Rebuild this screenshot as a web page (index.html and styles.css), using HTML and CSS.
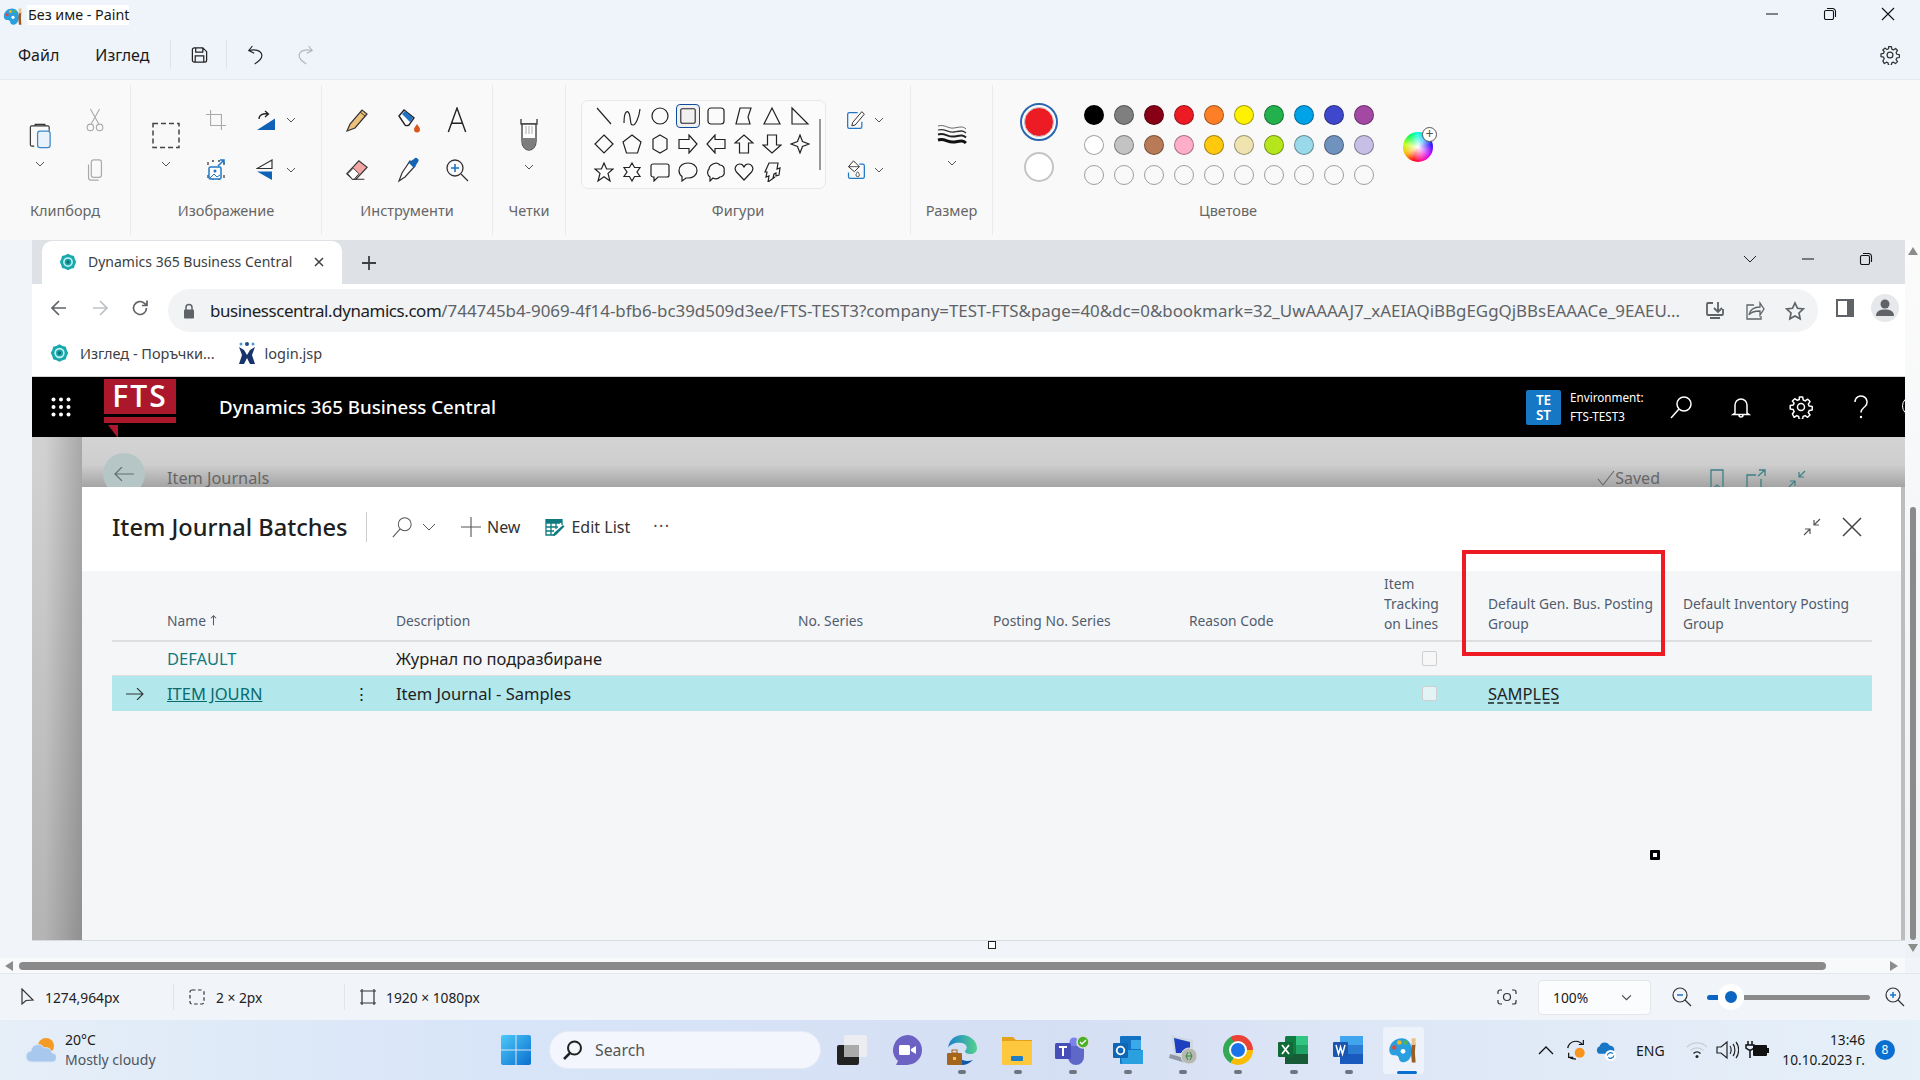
FILE: index.html
```html
<!DOCTYPE html>
<html lang="bg">
<head>
<meta charset="utf-8">
<title>Без име - Paint</title>
<link rel="stylesheet" href="styles.css">
</head>
<body>
<svg class="defs" aria-hidden="true">
  <symbol id="paint" viewBox="0 0 24 24">
    <path d="M11 2.500C5.500 2.500 1 6.600 1 12c0 3 2 4.500 4 4.200 2-.3 3.500.6 3.700 2.400.2 2.200 1.800 3.400 4 3.200 4-.5 6.300-4 6.300-9.800 0-5.700-3.500-9.500-8-9.500z" fill="#2a9fe0"/>
    <circle cx="5" cy="10" r="1.800" fill="#e2483d"/><circle cx="9" cy="6" r="1.800" fill="#f4b71d"/><circle cx="14" cy="6" r="1.800" fill="#4fb455"/><circle cx="12" cy="13" r="1.900" fill="#fff"/>
    <path d="M19 7h3l-.5 7 .6 8h-3l-.7-8z" fill="#9a5b24"/><path d="M18.800 2.500h3.400L22 8h-3z" fill="#e9c38b"/>
  </symbol>
  <symbol id="bc" viewBox="0 0 24 24">
    <path d="M12 1l4 2 4 1 1 4 2 4-2 4-1 4-4 1-4 2-4-2-4-1-1-4-2-4 2-4 1-4 4-1z" fill="#19a9ad"/>
    <circle cx="12" cy="12" r="5.500" fill="none" stroke="#c8f3f4" stroke-width="2"/><circle cx="12" cy="12" r="2.200" fill="#0b6f78"/>
  </symbol>
  <symbol id="chev" viewBox="0 0 10 6"><path d="M1 1l4 4 4-4" fill="none" stroke="currentColor" stroke-width="1"/></symbol>
  <symbol id="gear" viewBox="0 0 24 24">
    <path d="M10.300 2h3.400l.5 3 2 .9 2.500-1.700 2.300 2.400-1.700 2.500.9 2 3 .5v3.400l-3 .5-.9 2 1.700 2.500-2.400 2.300-2.500-1.700-2 .9-.5 3h-3.400l-.5-3-2-.9-2.500 1.700L3.400 19l1.700-2.500-.9-2-3-.5v-3.400l3-.5.9-2L3.400 6l2.400-2.300 2.500 1.700 2-.9z" fill="none" stroke="currentColor" stroke-width="1.500" stroke-linejoin="round"/>
    <circle cx="12" cy="12" r="3.500" fill="none" stroke="currentColor" stroke-width="1.500"/>
  </symbol>
  <symbol id="collapse" viewBox="0 0 20 20"><path d="M2 18l6-6M8 17v-5H3M18 2l-6 6M12 3v5h5" fill="none" stroke="currentColor" stroke-width="1.200"/></symbol>
</svg>

<header class="titlebar">
  <svg class="app-icon"><use href="#paint"/></svg>
  <span class="doc-title">Без име - Paint</span>
  <div class="win-controls">
    <svg class="wc wc-min" viewBox="0 0 14 14"><path d="M1 7h12" stroke="#111" fill="none"/></svg>
    <svg class="wc" viewBox="0 0 14 14"><path d="M4 1.500h5.500a3 3 0 0 1 3 3V10M1.500 5a1.500 1.500 0 0 1 1.500-1.500h6A1.500 1.500 0 0 1 10.500 5v6A1.500 1.500 0 0 1 9 12.500H3A1.500 1.500 0 0 1 1.500 11z" stroke="#111" fill="none" stroke-width="1.100"/></svg>
    <svg class="wc" viewBox="0 0 14 14"><path d="M1 1l12 12M13 1L1 13" stroke="#111" fill="none" stroke-width="1.100"/></svg>
  </div>
</header>

<nav class="menubar">
  <span class="menu-item m-file">Файл</span>
  <span class="menu-item m-view">Изглед</span>
  <i class="menu-sep sep-a"></i>
  <svg class="menu-ico" viewBox="0 0 20 20"><path d="M2.500 4.500a2 2 0 0 1 2-2h9l4 4v9a2 2 0 0 1-2 2h-11a2 2 0 0 1-2-2zM6 2.500v4.500h7.500V2.500M5.500 17.500V11h9v6.500" fill="none" stroke="#222" stroke-width="1.300"/></svg>
  <i class="menu-sep sep-b"></i>
  <svg class="menu-ico undo" viewBox="0 0 20 24"><path d="M6 2L2 7l6 3M2.500 7c6-1.500 13-.5 14 5 .5 4-3 7-8 10" fill="none" stroke="#222" stroke-width="1.300"/></svg>
  <svg class="menu-ico redo" viewBox="0 0 20 24"><path d="M14 2l4 5-6 3M17.500 7c-6-1.500-13-.5-14 5-.5 4 3 7 8 10" fill="none" stroke="#b5b5b5" stroke-width="1.300"/></svg>
  <svg class="menu-gear"><use href="#gear"/></svg>
</nav>

<section class="ribbon">
  <div class="group g-clip">
    <div class="tools grid-clip">
      <div class="big">
        <svg class="big-ico" viewBox="0 0 24 28"><path d="M6 25H3.500A1.500 1.500 0 0 1 2 23.500V5.500A1.500 1.500 0 0 1 3.500 4H20a1.500 1.500 0 0 1 1.500 1.500V9M7 4V2.500h10V4" fill="none" stroke="#333" stroke-width="1.200"/><rect x="9.500" y="9.500" width="13" height="17" rx="2.500" fill="#e9f2fb" stroke="#3c86c8" stroke-width="1.300"/></svg>
        <svg class="chev-ico"><use href="#chev"/></svg>
      </div>
      <svg class="mid-ico" viewBox="0 0 20 26"><path d="M5 1l9 16M15 1L6 17" stroke="#aaa" fill="none" stroke-width="1.200"/><circle cx="5" cy="21" r="3.500" fill="none" stroke="#aaa" stroke-width="1.200"/><circle cx="15" cy="21" r="3.500" fill="none" stroke="#aaa" stroke-width="1.200"/></svg>
      <svg class="mid-ico" viewBox="0 0 20 26"><rect x="6" y="2" width="11" height="19" rx="2.500" fill="none" stroke="#aaa" stroke-width="1.300"/><path d="M3 7v14a3 3 0 0 0 3 3h8" fill="none" stroke="#aaa" stroke-width="1.300"/></svg>
    </div>
    <div class="label">Клипборд</div>
  </div>

  <div class="group g-image">
    <div class="tools grid-image">
      <div class="big">
        <svg class="big-ico wide" viewBox="0 0 28 26"><rect x="1" y="1" width="26" height="24" fill="none" stroke="#444" stroke-width="1.500" stroke-dasharray="5 3"/></svg>
        <svg class="chev-ico"><use href="#chev"/></svg>
      </div>
      <svg class="mid-ico" viewBox="0 0 22 22"><path d="M5 0v17h17M0 5h17v17" fill="none" stroke="#aaa" stroke-width="1.200"/></svg>
      <svg class="mid-ico" viewBox="0 0 20 20"><path d="M1 20L19 8.500V20z" fill="#0f62b5"/><path d="M3 9c0-4 4-6 9-5M9 1l3.500 3L9 7" fill="none" stroke="#222" stroke-width="1.300"/></svg>
      <svg class="chev-ico small"><use href="#chev"/></svg>
      <svg class="mid-ico" viewBox="0 0 20 22"><path d="M2 3v3M2 16v3M18 3v3M18 16v3M6 2h2M12 2h2M6 20h2M12 20h2" stroke="#444" fill="none" stroke-width="1.300"/><rect x="3" y="8" width="12" height="12" rx="1.500" fill="#fff" stroke="#2178c4" stroke-width="1.500"/><circle cx="9" cy="12" r="1.500" fill="#2178c4"/><path d="M4 19l4-4 3 3 3-2" stroke="#2178c4" fill="none"/><path d="M12 7l6-6M14 1h4v4" stroke="#2178c4" fill="none" stroke-width="1.500"/></svg>
      <svg class="mid-ico" viewBox="0 0 20 22"><path d="M16 1L1 9.500h15z" fill="none" stroke="#333" stroke-width="1.200"/><path d="M16 21L1 12.500h15z" fill="#0f62b5"/></svg>
      <svg class="chev-ico small"><use href="#chev"/></svg>
    </div>
    <div class="label">Изображение</div>
  </div>

  <div class="group g-tools">
    <div class="tools grid-tools">
      <svg class="tool-ico" viewBox="0 0 24 26"><path d="M2 24l3-7L17 3l5 4-12 14z" fill="#eec27d" stroke="#333" stroke-width="1.200"/><path d="M15 5l5 4" stroke="#333" fill="none"/></svg>
      <svg class="tool-ico" viewBox="0 0 24 26"><path d="M3 9l5-6 10 8-5 7c-2 1-3 1-4 0z" fill="#fff" stroke="#222" stroke-width="1.400"/><path d="M6 7l3-3 8 7-3 4z" fill="#1d72c4"/><path d="M21 17c2 3 3 4 3 5.500a3 3 0 0 1-6 0c0-1.500 1-2.500 3-5.500z" fill="#d9581f"/></svg>
      <svg class="tool-ico" viewBox="0 0 20 24"><path d="M2 23L10 1l8 22M5 15h10" fill="none" stroke="#222" stroke-width="1.300"/></svg>
      <svg class="tool-ico" viewBox="0 0 26 26"><path d="M2 17L15 3l9 7-12 13H8z" fill="#f3a6a6" stroke="#333" stroke-width="1.200"/><path d="M2 17l7 6h12" fill="none" stroke="#333" stroke-width="1.200"/><path d="M3 17l6-6 6 6-5 6H8z" fill="#fff" stroke="#333"/></svg>
      <svg class="tool-ico" viewBox="0 0 22 26"><path d="M13 4l5 5-10 11-6 4 3-8z" fill="#fff" stroke="#333" stroke-width="1.200"/><path d="M11 5l6 6 2-3 2-3a2.500 2.500 0 0 0-4-3l-3 2z" fill="#1565b5"/></svg>
      <svg class="tool-ico" viewBox="0 0 24 24"><circle cx="10" cy="10" r="8" fill="none" stroke="#333" stroke-width="1.300"/><path d="M16 16l7 7" stroke="#333" stroke-width="1.300"/><path d="M10 6v8M6 10h8" stroke="#1d72c4" stroke-width="1.600"/></svg>
    </div>
    <div class="label">Инструменти</div>
  </div>

  <div class="group g-brush">
    <div class="tools centered">
      <div class="big">
        <svg class="big-ico brush" viewBox="0 0 18 34"><path d="M1 1v5h16V1" fill="none" stroke="#444" stroke-width="1.400"/><path d="M2 6h14v17c0 5-3 9-7 9s-7-4-7-9z" fill="#fff" stroke="#444" stroke-width="1.400"/><path d="M2 20h14v3c0 5-3 9-7 9s-7-4-7-9z" fill="#7d7d7d"/><path d="M6 8v8M9 8v8M12 8v8" stroke="#aaa"/></svg>
        <svg class="chev-ico"><use href="#chev"/></svg>
      </div>
    </div>
    <div class="label">Четки</div>
  </div>

  <div class="group g-shapes">
    <div class="tools shapes-row">
      <div class="shape-panel">
        <svg class="shape" viewBox="0 0 20 20"><path d="M3 2l14 16" /></svg>
        <svg class="shape" viewBox="0 0 20 20"><path d="M2 17c0-14 5-14 6-6s1 8 3 8 6-6 7-16"/></svg>
        <svg class="shape" viewBox="0 0 20 20"><circle cx="10" cy="10" r="8"/></svg>
        <svg class="shape sel" viewBox="0 0 20 20"><rect x="2" y="2" width="16" height="16" rx="1.500"/></svg>
        <svg class="shape" viewBox="0 0 20 20"><rect x="2" y="2" width="16" height="16" rx="3"/></svg>
        <svg class="shape" viewBox="0 0 20 20"><path d="M6 2h11l-3 9 2 7H2z"/></svg>
        <svg class="shape" viewBox="0 0 20 20"><path d="M10 2l8 16H2z"/></svg>
        <svg class="shape" viewBox="0 0 20 20"><path d="M2 2l16 16H2z"/></svg>
        <svg class="shape" viewBox="0 0 20 20"><path d="M10 1l9 9-9 9-9-9z"/></svg>
        <svg class="shape" viewBox="0 0 20 20"><path d="M10 1l9 7-3.500 11h-11L1 8z"/></svg>
        <svg class="shape" viewBox="0 0 20 20"><path d="M10 1l7 4v10l-7 4-7-4V5z"/></svg>
        <svg class="shape" viewBox="0 0 20 20"><path d="M1 5.500h10V1l8 9-8 9v-4.500H1z"/></svg>
        <svg class="shape" viewBox="0 0 20 20"><path d="M19 5.500H9V1l-8 9 8 9v-4.500h10z"/></svg>
        <svg class="shape" viewBox="0 0 20 20"><path d="M5.500 19V9H1l9-8 9 8h-4.500v10z"/></svg>
        <svg class="shape" viewBox="0 0 20 20"><path d="M5.500 1v10H1l9 8 9-8h-4.500V1z"/></svg>
        <svg class="shape" viewBox="0 0 20 20"><path d="M10 1l2.500 6.500L19 10l-6.500 2.500L10 19l-2.500-6.500L1 10l6.500-2.500z"/></svg>
        <svg class="shape" viewBox="0 0 20 20"><path d="M10 1l2.600 6H19l-5 4.400L16 19l-6-4.200L4 19l2-7.600L1 7h6.400z"/></svg>
        <svg class="shape" viewBox="0 0 20 20"><path d="M10 1l2.600 4.500H18L15 10l3 4.500h-5.400L10 19l-2.600-4.500H2L5 10 2 5.500h5.400z"/></svg>
        <svg class="shape" viewBox="0 0 20 20"><path d="M3 2h14a2 2 0 0 1 2 2v9a2 2 0 0 1-2 2H8l-4 4v-4H3a2 2 0 0 1-2-2V4a2 2 0 0 1 2-2z"/></svg>
        <svg class="shape" viewBox="0 0 20 20"><path d="M10 1c5 0 9 3 9 7.500S15 16 10 16H8l-4 3v-4.500C2 13 1 11 1 8.500 1 4 5 1 10 1z"/></svg>
        <svg class="shape" viewBox="0 0 20 20"><path d="M10 1c2 0 3 1 4 2 3 0 5 3 4 6 1 3-1 6-4 6-2 2-5 2-7 1l-3 3v-4c-3-2-3-6-1-8 0-3 3-5 7-6z"/></svg>
        <svg class="shape" viewBox="0 0 20 20"><path d="M10 18L2.500 10C-.5 6.500 2 2 6 2c2 0 3 1 4 3 1-2 2-3 4-3 4 0 6.500 4.500 3.500 8z"/></svg>
        <svg class="shape" viewBox="0 0 20 20"><path d="M7 1h9l-1 6 3-1-1 7-3 1v-3l-2 1-1 4 2-1-7 5 1-6-3 1 1-5H3z"/></svg>
        <i class="shape-thumb"></i>
      </div>
      <div class="shape-opts">
        <svg class="opt-ico" viewBox="0 0 24 24"><path d="M14 3H4a2 2 0 0 0-2 2v15a2 2 0 0 0 2 2h13a2 2 0 0 0 2-2v-6" fill="none" stroke="#2178c4" stroke-width="1.500"/><path d="M19 2l3 3L11 18l-4 1 1-4z" fill="#fff" stroke="#333" stroke-width="1.200"/></svg>
        <svg class="chev-ico small"><use href="#chev"/></svg>
        <svg class="opt-ico" viewBox="0 0 24 24"><path d="M16 5h4a2 2 0 0 1 2 2v13a2 2 0 0 1-2 2H5a2 2 0 0 1-2-2v-5" fill="none" stroke="#2178c4" stroke-width="1.500"/><path d="M9 1l7 7-6 6-7-6z" fill="#fff" stroke="#333" stroke-width="1.200"/><path d="M3 8h13" stroke="#333"/><path d="M14 14c1.500 2 2 3 2 4a2 2 0 0 1-4 0c0-1 .5-2 2-4z" fill="#fff" stroke="#333"/></svg>
        <svg class="chev-ico small"><use href="#chev"/></svg>
      </div>
    </div>
    <div class="label">Фигури</div>
  </div>

  <div class="group g-size">
    <div class="tools centered">
      <div class="big">
        <svg class="big-ico sizes" viewBox="0 0 30 26"><path d="M1 4c7-2 10 3 16 2s9-2 12 1" fill="none" stroke="#444" stroke-width=".8"/><path d="M1 8c7-2 10 3 16 2s9-2 12 1" fill="none" stroke="#333" stroke-width="1.300"/><path d="M1 12.500c7-2 10 3 16 2s9-2 12 1" fill="none" stroke="#222" stroke-width="2"/><path d="M1 18c7-2 10 3 16 2s9-2 12 1" fill="none" stroke="#111" stroke-width="3"/></svg>
        <svg class="chev-ico"><use href="#chev"/></svg>
      </div>
    </div>
    <div class="label">Размер</div>
  </div>

  <div class="group g-colors">
    <div class="tools colors-row">
      <div class="active-colors">
        <span class="col-main"><i></i></span>
        <span class="col-second"></span>
      </div>
      <div class="palette">
        <i class="sw s1"></i><i class="sw s2"></i><i class="sw s3"></i><i class="sw s4"></i><i class="sw s5"></i><i class="sw s6"></i><i class="sw s7"></i><i class="sw s8"></i><i class="sw s9"></i><i class="sw s10"></i>
        <i class="sw s11"></i><i class="sw s12"></i><i class="sw s13"></i><i class="sw s14"></i><i class="sw s15"></i><i class="sw s16"></i><i class="sw s17"></i><i class="sw s18"></i><i class="sw s19"></i><i class="sw s20"></i>
        <i class="sw"></i><i class="sw"></i><i class="sw"></i><i class="sw"></i><i class="sw"></i><i class="sw"></i><i class="sw"></i><i class="sw"></i><i class="sw"></i><i class="sw"></i>
      </div>
      <div class="wheel"><span class="wheel-plus">+</span></div>
    </div>
    <div class="label colors-label">Цветове</div>
  </div>
</section>

<main class="viewport">
  <div class="canvas-area">
    <div class="shot">
      <div class="tabstrip">
        <div class="tab">
          <svg class="fav"><use href="#bc"/></svg>
          <span class="tab-title">Dynamics 365 Business Central</span>
          <svg class="tab-x" viewBox="0 0 10 10"><path d="M1 1l8 8M9 1L1 9" stroke="#3c4043" stroke-width="1.500" fill="none"/></svg>
        </div>
        <svg class="tab-plus" viewBox="0 0 14 14"><path d="M7 0v14M0 7h14" stroke="#3c4043" stroke-width="1.800" fill="none"/></svg>
        <div class="strip-right">
          <svg class="strip-chev" viewBox="0 0 14 8"><path d="M1 1l6 6 6-6" stroke="#222" fill="none"/></svg>
          <svg class="wc strip-min" viewBox="0 0 14 14"><path d="M1 7h12" stroke="#111" fill="none"/></svg>
          <svg class="wc" viewBox="0 0 14 14"><path d="M4 1.500h5.500a3 3 0 0 1 3 3V10M1.500 5a1.500 1.500 0 0 1 1.500-1.500h6A1.500 1.500 0 0 1 10.500 5v6A1.500 1.500 0 0 1 9 12.500H3A1.500 1.500 0 0 1 1.500 11z" stroke="#111" fill="none" stroke-width="1.100"/></svg>
        </div>
      </div>
      <div class="toolbar">
        <svg class="nav-ico" viewBox="0 0 18 18"><path d="M16 9H2M9 2L2 9l7 7" stroke="#5f6368" stroke-width="1.700" fill="none"/></svg>
        <svg class="nav-ico" viewBox="0 0 18 18"><path d="M2 9h14M9 2l7 7-7 7" stroke="#bdc1c6" stroke-width="1.700" fill="none"/></svg>
        <svg class="nav-ico nav-last" viewBox="0 0 18 18"><path d="M15.500 9a6.500 6.500 0 1 1-2-4.700L16 6.500M16 1.500v5h-5" stroke="#5f6368" stroke-width="1.700" fill="none"/></svg>
        <div class="omnibox">
          <svg class="lock" viewBox="0 0 12 16"><path d="M3 7V4.500a3 3 0 0 1 6 0V7" fill="none" stroke="#5f6368" stroke-width="1.500"/><rect x="1" y="6.500" width="10" height="9" rx="1" fill="#5f6368"/></svg>
          <span class="url"><b>businesscentral.dynamics.com</b>/744745b4-9069-4f14-bfb6-bc39d509d3ee/FTS-TEST3?company=TEST-FTS&amp;page=40&amp;dc=0&amp;bookmark=32_UwAAAAJ7_xAEIAQiBBgEGgQjBBsEAAACe_9EAEU...</span>
          <svg class="omni-ico omni-first" viewBox="0 0 20 20"><path d="M8 2H3a1 1 0 0 0-1 1v10a1 1 0 0 0 1 1h14a1 1 0 0 0 1-1V8M13 1v9M9 7l4 4 4-4M5 17h10" fill="none" stroke="#5f6368" stroke-width="1.800"/></svg>
          <svg class="omni-ico" viewBox="0 0 20 20"><path d="M15 2v4c-7 0-10 3-11 8 2-3 5-4 11-4v4l4-6zM9 4H2v14h14v-3" fill="none" stroke="#5f6368" stroke-width="1.300"/></svg>
          <svg class="omni-ico" viewBox="0 0 20 20"><path d="M10 2l2.500 5.300 5.700.7-4.200 4 1.100 5.800-5.100-2.900-5.100 2.900L6 12 1.800 8l5.700-.7z" fill="none" stroke="#5f6368" stroke-width="1.700"/></svg>
        </div>
        <svg class="panel-ico" viewBox="0 0 18 18"><path d="M0 0h18v18H0zM2 2v14h9V2z" fill="#5f6368" fill-rule="evenodd"/></svg>
        <span class="avatar"><svg viewBox="0 0 20 20"><circle cx="10" cy="6" r="4.500" fill="#5f6368"/><path d="M1 18c0-5 4-6.500 9-6.500s9 1.500 9 6.500z" fill="#5f6368"/></svg></span>
      </div>
      <div class="bookmarks">
        <svg class="bm-fav"><use href="#bc"/></svg>
        <span class="bm">Изглед - Поръчки...</span>
        <svg class="jira" viewBox="0 0 18 24"><circle cx="9" cy="3" r="2" fill="#1f4a8c"/><circle cx="3" cy="3" r="1.500" fill="#4a9ad4"/><circle cx="15" cy="3" r="1.500" fill="#4a9ad4"/><path d="M1 6l5 3 3 5 3-5 5-3-3 8 3 9h-5l-3-6-3 6H1l3-9z" fill="#17336b"/></svg>
        <span class="bm bm-last">login.jsp</span>
      </div>
      <div class="bc-header">
        <svg class="waffle" viewBox="0 0 20 20"><g fill="#fff"><circle cx="2.500" cy="2.500" r="2"/><circle cx="10" cy="2.500" r="2"/><circle cx="17.500" cy="2.500" r="2"/><circle cx="2.500" cy="10" r="2"/><circle cx="10" cy="10" r="2"/><circle cx="17.500" cy="10" r="2"/><circle cx="2.500" cy="17.500" r="2"/><circle cx="10" cy="17.500" r="2"/><circle cx="17.500" cy="17.500" r="2"/></g></svg>
        <div class="logo">
          <div class="logo-box">FTS</div>
          <i class="logo-bar"></i>
          <i class="logo-tip"></i>
        </div>
        <span class="bc-title">Dynamics 365 Business Central</span>
        <div class="bc-right">
          <div class="env-badge"><span>TE</span><span>ST</span></div>
          <div class="env-text"><span>Environment:</span><span>FTS-TEST3</span></div>
          <svg class="bc-ico" viewBox="0 0 24 24"><circle cx="15" cy="9" r="7" fill="none" stroke="#fff" stroke-width="1.500"/><path d="M10 14L2 23" stroke="#fff" stroke-width="1.500"/></svg>
          <svg class="bc-ico" viewBox="0 0 24 24"><path d="M6 18V10a6 6 0 0 1 12 0v8l2 1.500H4zM10 20a2 2 0 0 0 4 0" fill="none" stroke="#fff" stroke-width="1.500"/></svg>
          <svg class="bc-ico bc-gear"><use href="#gear"/></svg>
          <svg class="bc-ico bc-help" viewBox="0 0 24 24"><path d="M6 7a6 6 0 1 1 10 4.500c-2 1.700-4 3-4 6" fill="none" stroke="#fff" stroke-width="1.500"/><circle cx="12" cy="22" r="1.200" fill="#fff"/></svg>
          <i class="bc-cut"></i>
        </div>
      </div>
      <div class="bc-page">
        <div class="dim-bar">
          <span class="dim-back"><svg viewBox="0 0 20 14"><path d="M20 7H1M8 0L1 7l7 7" fill="none" stroke="#5f6f6f" stroke-width="1.200"/></svg></span>
          <span class="dim-title">Item Journals</span>
          <span class="dim-saved"><svg class="dim-check" viewBox="0 0 18 16"><path d="M1 9l5 6L17 1" fill="none" stroke="#666" stroke-width="1.100"/></svg>Saved</span>
          <svg class="dim-ico dim-book" viewBox="0 0 14 22"><path d="M1 1h12v20l-6-5-6 5z" fill="none" stroke="#3d8086" stroke-width="1.300"/></svg>
          <svg class="dim-ico dim-open" viewBox="0 0 20 20"><path d="M15 10v9H1V6h9M12 7l7-6M13 1h6v6" fill="none" stroke="#3d8086" stroke-width="1.300"/></svg>
          <svg class="dim-ico dim-col"><use href="#collapse"/></svg>
        </div>
        <div class="dialog">
          <div class="dlg-head">
            <h1 class="dlg-title">Item Journal Batches</h1>
            <i class="dlg-sep"></i>
            <svg class="act-search" viewBox="0 0 24 24"><circle cx="15" cy="9" r="7" fill="none" stroke="#555" stroke-width="1.100"/><path d="M10 14L2 23" stroke="#555" stroke-width="1.100"/></svg>
            <svg class="act-chev" viewBox="0 0 14 8"><path d="M1 1l6 6 6-6" stroke="#555" fill="none"/></svg>
            <svg class="act-plus" viewBox="0 0 20 20"><path d="M10 0v20M0 10h20" stroke="#555" fill="none" stroke-width="1.100"/></svg>
            <span class="act-text">New</span>
            <svg class="act-edit" viewBox="0 0 20 18"><path d="M1 1h16v4H1z" fill="#0f7b7f"/><path d="M1 5h14M1 9h12M1 13h8M1 1v16h9M6 5v12M11 5v6M17 1v6" stroke="#0f7b7f" fill="none" stroke-width="1.300"/><path d="M18 7l1.500 1.500L11 17l-3 1 1-3z" fill="#0f7b7f"/></svg>
            <span class="act-text">Edit List</span>
            <span class="act-more">···</span>
            <svg class="dlg-collapse"><use href="#collapse"/></svg>
            <svg class="dlg-close" viewBox="0 0 20 20"><path d="M1 1l18 18M19 1L1 19" stroke="#444" stroke-width="1.500" fill="none"/></svg>
          </div>
          <div class="grid">
            <div class="row row-head">
              <span></span>
              <span class="single">Name <svg class="sort" viewBox="0 0 8 12"><path d="M4 12V1M1 4l3-3 3 3" stroke="#505c6d" fill="none" stroke-width="1.200"/></svg></span>
              <span class="single">Description</span>
              <span class="single">No. Series</span>
              <span class="single">Posting No. Series</span>
              <span class="single">Reason Code</span>
              <span>Item<br>Tracking<br>on Lines</span>
              <span>Default Gen. Bus. Posting<br>Group</span>
              <span>Default Inventory Posting<br>Group</span>
            </div>
            <div class="row row-data">
              <span></span>
              <a class="link">DEFAULT</a>
              <span>Журнал по подразбиране</span>
              <span></span><span></span><span></span>
              <span class="check"><i></i></span>
              <span></span><span></span>
            </div>
            <div class="row row-data row-sel">
              <svg class="sel-arrow" viewBox="0 0 18 12"><path d="M0 6h17M11 0l6 6-6 6" stroke="#333" fill="none" stroke-width="1.100"/></svg>
              <div class="name-cell"><a class="link under">ITEM JOURN</a><span class="kebab">⋮</span></div>
              <span>Item Journal - Samples</span>
              <span></span><span></span><span></span>
              <span class="check"><i></i></span>
              <span class="dashed">SAMPLES</span>
              <span></span>
            </div>
          </div>
          <i class="red-rect"></i>
          <i class="sel-dot"></i>
        </div>
      </div>
    </div>
    <i class="resize-handle"></i>
  </div>
  <aside class="vscroll">
    <i class="arrow-up"></i>
    <i class="v-thumb"></i>
    <i class="arrow-down"></i>
  </aside>
</main>

<div class="hscroll">
  <i class="arrow-left"></i>
  <i class="h-thumb"></i>
  <i class="arrow-right"></i>
</div>

<footer class="statusbar">
  <svg class="st-ico" viewBox="0 0 18 18"><path d="M4 1v15l4-3.500 7-.5z" fill="none" stroke="#333" stroke-width="1.200"/></svg>
  <span class="st-text st-pos">1274,964px</span>
  <i class="st-sep"></i>
  <svg class="st-ico" viewBox="0 0 18 18"><rect x="2" y="2" width="14" height="14" rx="2" fill="none" stroke="#333" stroke-width="1.200" stroke-dasharray="3.500 2.500"/></svg>
  <span class="st-text st-sel">2 × 2px</span>
  <i class="st-sep"></i>
  <svg class="st-ico" viewBox="0 0 18 18"><path d="M3 1v16M15 1v16M1 3h16M1 15h16" fill="none" stroke="#333" stroke-width="1.200"/></svg>
  <span class="st-text">1920 × 1080px</span>
  <div class="st-right">
    <svg class="st-shot" viewBox="0 0 20 16"><circle cx="10" cy="8" r="3.500" fill="none" stroke="#333" stroke-width="1.200"/><path d="M1 5V3a2 2 0 0 1 2-2h2M15 1h2a2 2 0 0 1 2 2v2M19 11v2a2 2 0 0 1-2 2h-2M5 15H3a2 2 0 0 1-2-2v-2" fill="none" stroke="#333" stroke-width="1.200"/></svg>
    <div class="zoom-select"><span>100%</span><svg viewBox="0 0 10 6"><path d="M1 1l4 4 4-4" stroke="#444" fill="none"/></svg></div>
    <svg class="zoom-ico" viewBox="0 0 20 20"><circle cx="8" cy="8" r="7" fill="none" stroke="#333" stroke-width="1.200"/><path d="M13 13l6 6" stroke="#333" stroke-width="1.200"/><path d="M5 8h6" stroke="#1d72c4" stroke-width="1.500"/></svg>
    <div class="slider"><i class="slider-on"></i><i class="slider-thumb"></i><i class="slider-off"></i></div>
    <svg class="zoom-ico" viewBox="0 0 20 20"><circle cx="8" cy="8" r="7" fill="none" stroke="#333" stroke-width="1.200"/><path d="M13 13l6 6" stroke="#333" stroke-width="1.200"/><path d="M5 8h6M8 5v6" stroke="#1d72c4" stroke-width="1.500"/></svg>
  </div>
</footer>

<footer class="taskbar">
  <div class="weather">
    <svg class="weather-ico" viewBox="0 0 30 26"><circle cx="20" cy="9" r="8" fill="#f59a23"/><path d="M6 25a5.500 5.500 0 0 1-1-11 7 7 0 0 1 13-3 6 6 0 0 1 8 5 4.500 4.500 0 0 1 0 9z" fill="#a8c8ee" stroke="#d8e6f8"/></svg>
    <div class="weather-text"><span class="w-temp">20°C</span><span class="w-desc">Mostly cloudy</span></div>
  </div>
  <svg class="winlogo" viewBox="0 0 30 30"><defs><linearGradient id="w" x1="0" y1="0" x2="1" y2="1"><stop offset="0" stop-color="#4cc9f8"/><stop offset="1" stop-color="#0a6fd0"/></linearGradient></defs><path d="M2 0h12.500v14.500H0V2a2 2 0 0 1 2-2zM15.500 0H28a2 2 0 0 1 2 2v12.500H15.500zM0 15.500h14.500V30H2a2 2 0 0 1-2-2zM15.500 15.500H30V28a2 2 0 0 1-2 2H15.500z" fill="url(#w)"/></svg>
  <div class="tb-search">
    <svg viewBox="0 0 20 20"><circle cx="11.500" cy="8" r="6.500" fill="none" stroke="#222" stroke-width="2"/><path d="M7 13l-6 6" stroke="#222" stroke-width="2.500"/></svg>
    <span>Search</span>
  </div>
  <div class="tb-apps">
    <div class="app">
      <svg viewBox="0 0 30 30"><rect x="0" y="10" width="22" height="20" rx="2" fill="#222"/><rect x="7" y="0" width="23" height="22" rx="2" fill="#eee" fill-opacity=".85"/><rect x="7" y="10" width="15" height="12" fill="#aaa"/></svg>
    </div>
    <div class="app">
      <svg viewBox="0 0 30 30"><path d="M15 0a15 15 0 0 1 0 30H4l2-4A15 15 0 0 1 15 0z" fill="#6b62c4"/><rect x="7" y="10" width="11" height="10" rx="1.500" fill="#fff"/><path d="M19 14l5-3v8l-5-3z" fill="#fff"/></svg>
    </div>
    <div class="app running">
      <svg viewBox="0 0 30 30"><defs><linearGradient id="e" x1="0" y1="0" x2="1" y2="0"><stop offset="0" stop-color="#1a7fd0"/><stop offset="1" stop-color="#54d28c"/></linearGradient></defs><path d="M1 13C2 5 8 0 15 0c8 0 15 6 15 13 0 4-3 6-7 6-3 0-5-1-5-3 3-3 2-7-3-8-6-1-12 1-14 5z" fill="url(#e)"/><path d="M10 17c1 7 7 11 16 8-3 3-7 5-11 5-2 0-4-1-5-2z" fill="#0f5ba8"/><rect x="0" y="18" width="15" height="12" rx="1" fill="#a4651d"/><rect x="5" y="15" width="5" height="3" fill="none" stroke="#a4651d"/><rect x="6" y="22" width="3" height="3" fill="#f5c34a"/></svg>
    </div>
    <div class="app running">
      <svg viewBox="0 0 30 30"><path d="M0 2h11l3 3h16v5H0z" fill="#e3a21a"/><rect x="0" y="6" width="30" height="24" rx="1" fill="#fdc83e"/><rect x="9" y="21" width="12" height="5" rx="1" fill="#1f7fc4"/></svg>
    </div>
    <div class="app running">
      <svg class="teams" viewBox="0 0 34 30"><circle cx="19" cy="7" r="4.500" fill="#7b83eb"/><path d="M11 11h16a2 2 0 0 1 2 2v9a8 8 0 0 1-16 0z" fill="#5f67c9"/><rect x="0" y="8" width="16" height="16" rx="1.500" fill="#464eb8"/><path d="M4 12h8M8 12v9" stroke="#fff" stroke-width="2" fill="none"/><circle cx="28" cy="7" r="6" fill="#4caf28" stroke="#ddd" stroke-width="1.500"/><path d="M25 7l2 2 4-4" stroke="#fff" stroke-width="1.300" fill="none"/></svg>
    </div>
    <div class="app running">
      <svg viewBox="0 0 30 30"><rect x="7" y="1" width="21" height="28" rx="1" fill="#1472c4"/><rect x="18" y="5" width="10" height="9" fill="#3ba8e8"/><path d="M7 15h23v14H9z" fill="#2aa0e0"/><rect x="0" y="8" width="15" height="15" rx="1" fill="#0e66b4"/><circle cx="7.500" cy="15.500" r="3.800" fill="none" stroke="#fff" stroke-width="1.800"/></svg>
    </div>
    <div class="app running">
      <svg viewBox="0 0 30 30"><path d="M3 0l22 5v16L6 21z" fill="#cfd8e3"/><path d="M6 3l16 4v11L8 18z" fill="#1d3fc0"/><path d="M2 19l18 5-2 4L1 23z" fill="#8f98a5"/><circle cx="21" cy="21" r="8" fill="#b5b8b5" stroke="#ddd"/><path d="M18 21h6M20 17l-2 4 2 4M22 17l2 4-2 4" stroke="#2e8a2e" fill="none"/></svg>
    </div>
    <div class="app running">
      <div class="chrome"><i></i></div>
    </div>
    <div class="app running">
      <svg viewBox="0 0 30 30"><rect x="7" y="1" width="23" height="28" rx="1.500" fill="#107c41"/><rect x="18" y="1" width="12" height="9" fill="#33c481"/><rect x="18" y="10" width="12" height="9" fill="#21a366"/><rect x="7" y="19" width="23" height="10" fill="#185c37"/><rect x="0" y="7" width="15" height="15" rx="1" fill="#0f6a38"/><path d="M4 10l7 9M11 10l-7 9" stroke="#fff" stroke-width="1.800" fill="none"/></svg>
    </div>
    <div class="app running">
      <svg viewBox="0 0 30 30"><rect x="7" y="1" width="23" height="28" rx="1.500" fill="#2b7cd3"/><rect x="7" y="1" width="23" height="9" fill="#41a5ee"/><rect x="7" y="19" width="23" height="10" fill="#185abd"/><rect x="0" y="7" width="15" height="15" rx="1" fill="#1a56b0"/><path d="M3 10l2.500 9L7.500 12l2 7L12 10" stroke="#fff" stroke-width="1.500" fill="none"/></svg>
    </div>
    <div class="app active">
      <svg viewBox="0 0 24 24"><use href="#paint"/></svg>
    </div>
  </div>
  <div class="tray">
    <svg class="tray-ico" viewBox="0 0 24 22"><path d="M5 15l7-7 7 7" stroke="#111" fill="none" stroke-width="1.300"/></svg>
    <svg class="tray-ico" viewBox="0 0 24 24"><path d="M3 10a9 9 0 0 1 16-4M15 6h5V1M4 15v5h5M4 20c2 1 4 2 8 2" fill="none" stroke="#111" stroke-width="1.300"/><circle cx="16" cy="15" r="5.500" fill="#f7941d"/></svg>
    <svg class="tray-ico" viewBox="0 0 24 24"><path d="M4 16a4.500 4.500 0 0 1 1-8 6 6 0 0 1 11-1 5 5 0 0 1 5 6 4 4 0 0 0-5 3z" fill="#1677c5"/><circle cx="17" cy="18" r="6" fill="#fff"/><path d="M13.500 18a3.500 3.500 0 0 1 6-2M20.500 18a3.500 3.500 0 0 1-6 2" stroke="#1677c5" fill="none" stroke-width="1.300"/></svg>
    <span class="tray-lang">ENG</span>
    <svg class="tray-ico wifi" viewBox="0 0 24 18"><path d="M2 6a14 14 0 0 1 20 0" stroke="#c5cdd6" fill="none" stroke-width="1.300"/><path d="M5.500 9.500a9.500 9.500 0 0 1 13 0" stroke="#c5cdd6" fill="none" stroke-width="1.300"/><path d="M8.500 12.500a5 5 0 0 1 7 0" stroke="#222" fill="none" stroke-width="1.400"/><circle cx="12" cy="15.500" r="1.500" fill="#222"/></svg>
    <svg class="tray-ico" viewBox="0 0 24 20"><path d="M2 7h4l6-5v16l-6-5H2z" fill="none" stroke="#222" stroke-width="1.200"/><path d="M15 6c1.500 2 1.500 6 0 8M18 4c2.500 3 2.500 9 0 12M21 2c3.500 4 3.500 12 0 16" fill="none" stroke="#222" stroke-width="1.200"/></svg>
    <svg class="tray-ico" viewBox="0 0 24 20"><path d="M3 1v4M7 1v4M1 5h8v3l-3 2H4L1 8zM5 10v8" stroke="#111" fill="none" stroke-width="1.500"/><rect x="8" y="5" width="14" height="11" rx="1" fill="#111"/><rect x="22" y="8" width="2" height="5" fill="#111"/></svg>
    <div class="clock"><span>13:46</span><span>10.10.2023 г.</span></div>
    <span class="notif">8</span>
  </div>
</footer>
</body>
</html>
```
FILE: styles.css
```css
* { box-sizing: border-box; }
html, body { margin: 0; padding: 0; }
body {
  width: 1920px;
  height: 1080px;
  overflow: hidden;
  background: #f1f4f9;
  color: #1a1a1a;
  font-family: "Noto Sans", "Open Sans", sans-serif;
  font-size: 14px;
  display: flex;
  flex-direction: column;
}
i { display: block; font-style: normal; }
svg { display: block; flex: none; }
.defs { position: absolute; width: 0; height: 0; }

/* paint title and menu */
.titlebar { height: 40px; background: #eff4fb; display: flex; align-items: flex-start; padding: 5px 0 0 3px; }
.app-icon { width: 20px; height: 21px; margin-top: 1px; }
.doc-title { margin-left: 4px; width: 102px; height: 20px; padding-left: 1px; line-height: 20px; background: #fff; font-size: 14.300px; white-space: nowrap; }
.win-controls { margin-left: auto; display: flex; gap: 44px; padding: 2px 25px 0 0; }
.wc { width: 14px; height: 14px; }
.menubar { height: 40px; background: #eff4fb; border-bottom: 1px solid #e6e8ec; display: flex; align-items: center; padding: 0 0 10px 18px; }
.menu-item { font-size: 16px; line-height: 20px; }
.m-view { margin-left: 36px; }
.menu-sep { width: 1px; height: 29px; background: #e0e3e8; }
.sep-a { margin-left: 20px; }
.menu-ico { width: 19px; height: 20px; margin-left: 19px; }
.sep-b { margin-left: 17px; }
.menu-ico.undo { width: 18px; height: 22px; margin-left: 20px; }
.menu-ico.redo { width: 18px; height: 22px; margin-left: 31px; }
.menu-gear { width: 20px; height: 20px; color: #333; margin-left: auto; margin-right: 20px; }

/* ribbon */
.ribbon { height: 160px; background: #f9f9f9; display: flex; padding-top: 5px; }
.group { height: 150px; border-right: 1px solid #ebebeb; display: flex; flex-direction: column; }
.g-clip { width: 131px; }
.g-image { width: 191px; }
.g-tools { width: 171px; }
.g-brush { width: 73px; }
.g-shapes { width: 345px; }
.g-size { width: 82px; }
.g-colors { flex: 1; border-right: 0; }
.tools { height: 115px; padding-top: 10px; }
.label { height: 20px; line-height: 20px; text-align: center; color: #666; font-size: 14.500px; }
.big { grid-row: span 2; display: flex; flex-direction: column; align-items: center; }
.big-ico { width: 24px; height: 27px; margin-top: 27px; }
.big-ico.wide { width: 28px; }
.big-ico.brush { width: 18px; height: 34px; margin-top: 23px; }
.big-ico.sizes { width: 30px; height: 26px; }
.chev-ico { width: 10px; height: 6px; color: #555; margin-top: 12px; }
.chev-ico.small { margin-top: 0; align-self: center; justify-self: center; }
.mid-ico { width: 20px; height: 24px; align-self: center; justify-self: center; }
.tool-ico { width: 24px; height: 26px; align-self: center; justify-self: center; }
.grid-clip { display: grid; padding-left: 12px; grid-template-columns: 56px 54px; grid-template-rows: 50px 50px; }
.grid-clip .big { grid-column: 1; }
.grid-image { display: grid; padding-left: 15px; grid-template-columns: 40px 60px 40px 10px; grid-template-rows: 50px 50px; }
.grid-tools { display: grid; padding-left: 10px; grid-template-columns: 50px 51px 48px; grid-template-rows: 50px 50px; }
.centered { display: flex; justify-content: center; }
.shapes-row { display: flex; padding-left: 15px; }
.shape-panel { position: relative; width: 245px; height: 89px; margin-top: 5px; padding: 1px 0 0 8px; background: #fbfbfb; border: 1px solid #e8e8e8; border-radius: 7px; display: grid; grid-template-columns: repeat(8, 28px); grid-auto-rows: 28px; align-items: center; justify-items: center; }
.shape { width: 20px; height: 20px; fill: none; stroke: #222; stroke-width: 1.200; }
.shape.sel { width: 24px; height: 24px; padding: 2px; border: 1.500px solid #0f4d9c; border-radius: 4px; background: #f0f0f0; }
.shape-thumb { position: absolute; right: 4px; top: 18px; width: 2px; height: 51px; background: #999; }
.shape-opts { margin-left: 18px; display: grid; grid-template-columns: 24px 18px; grid-template-rows: 50px 50px; align-items: center; justify-items: center; }
.opt-ico { width: 20px; height: 20px; }
.opt-ico + .chev-ico { margin-left: 6px; justify-self: start; }
.colors-row { display: flex; align-items: flex-start; padding-left: 27px; }
.active-colors { width: 38px; margin-top: 8px; display: flex; flex-direction: column; align-items: center; gap: 11px; }
.col-main { width: 38px; height: 38px; border-radius: 50%; border: 2px solid #2b66b0; background: #f9f9f9; padding: 2px; }
.col-main i { width: 30px; height: 30px; border-radius: 50%; background: #ed1c24; border: 1px solid #c9c9c9; }
.col-second { width: 30px; height: 30px; border-radius: 50%; background: #fff; border: 2px solid #c4c4c4; }
.palette { margin: 10px 0 0 26px; width: 290px; display: grid; grid-template-columns: repeat(10, 20px); grid-auto-rows: 20px; gap: 10px; }
.sw { border-radius: 50%; border: 1px solid rgba(0,0,0,.36); background: transparent; }
.s1 { background: #000; } .s2 { background: #7f7f7f; } .s3 { background: #880015; } .s4 { background: #ed1c24; } .s5 { background: #ff7f27; }
.s6 { background: #fff200; } .s7 { background: #22b14c; } .s8 { background: #00a2e8; } .s9 { background: #3f48cc; } .s10 { background: #a349a4; }
.s11 { background: #fff; } .s12 { background: #c3c3c3; } .s13 { background: #b97a57; } .s14 { background: #ffaec9; } .s15 { background: #ffc90e; }
.s16 { background: #efe4b0; } .s17 { background: #b5e61d; } .s18 { background: #99d9ea; } .s19 { background: #7092be; } .s20 { background: #c8bfe7; }
.wheel { position: relative; width: 30px; height: 30px; margin: 37px 0 0 29px; border-radius: 50%; background: radial-gradient(circle, #fff 0, rgba(255,255,255,0) 70%), conic-gradient(#00ffe0, #00a0ff, #2000ff, #c000ff, #ff00a0, #ff0000, #ffb000, #c0ff00, #00ff40, #00ffe0); }
.wheel-plus { position: absolute; right: -4px; top: -5px; width: 15px; height: 15px; border-radius: 50%; background: #fff; border: 1px solid #555; font-size: 14px; line-height: 12px; text-align: center; color: #555; }
.colors-label { width: 470px; }

/* canvas */
.viewport { height: 718px; display: flex; }
.canvas-area { position: relative; width: 1905px; padding-left: 32px; }
.shot { width: 1873px; height: 701px; display: flex; flex-direction: column; border-bottom: 1px solid #d8dbe0; overflow: hidden; background: #fff; }
.resize-handle { position: absolute; left: 988px; top: 701px; width: 8px; height: 8px; background: #fff; border: 1.500px solid #222; }
.vscroll { width: 15px; background: linear-gradient(#fbfbfb, #eef1f5); display: flex; flex-direction: column; align-items: center; padding-top: 7px; }
.arrow-up { width: 0; height: 0; border: 5px solid transparent; border-top: 0; border-bottom: 8px solid #8c8c8c; }
.v-thumb { width: 6px; height: 433px; margin-top: 252px; background: #8a8a8a; border-radius: 3px; }
.arrow-down { width: 0; height: 0; margin-top: 4px; border: 5px solid transparent; border-bottom: 0; border-top: 8px solid #8c8c8c; }

/* chrome */
.tabstrip { height: 44px; background: #dee1e6; display: flex; align-items: flex-start; padding: 1px 0 0 10px; flex: none; }
.tab { width: 300px; height: 43px; background: #fff; border-radius: 10px 10px 0 0; display: flex; align-items: center; padding: 0 0 2px 17px; }
.fav { width: 18px; height: 20px; }
.tab-title { margin-left: 11px; width: 207px; font-size: 14px; color: #3c4043; white-space: nowrap; }
.tab-x { width: 10px; height: 10px; margin-left: 19px; }
.tab-plus { width: 14px; height: 14px; margin: 15px 0 0 20px; }
.strip-right { margin-left: auto; display: flex; align-items: center; height: 36px; padding-right: 32px; }
.strip-chev { width: 14px; height: 8px; margin-right: 44px; }
.strip-min { margin-right: 44px; }
.toolbar { height: 48px; background: #fff; display: flex; align-items: center; flex: none; padding-left: 18px; }
.nav-ico { width: 18px; height: 18px; margin-right: 23px; }
.nav-ico.nav-last { margin-right: 0; margin-left: -1px; }
.omnibox { margin-left: 19px; width: 1650px; height: 43px; margin-top: 5px; background: #f1f3f4; border-radius: 22px; display: flex; align-items: center; padding-left: 15px; }
.lock { width: 12px; height: 16px; }
.url { margin-left: 15px; width: 1474px; font-size: 16.900px; color: #5f6368; white-space: nowrap; overflow: hidden; }
.url b { font-weight: 400; color: #202124; letter-spacing: -0.400px; }
.omni-ico { width: 20px; height: 20px; margin-left: 20px; }
.omni-ico.omni-first { margin-left: 21px; }
.panel-ico { width: 18px; height: 18px; margin-left: 18px; }
.avatar { width: 28px; height: 28px; margin-left: 17px; border-radius: 50%; background: #e6e8ec; padding: 4px; }
.bookmarks { height: 45px; background: #fff; border-bottom: 1px solid #d5d5d5; display: flex; align-items: center; padding: 0 0 2px 18px; flex: none; }
.bm-fav { width: 19px; height: 22px; }
.bm { font-size: 14.500px; color: #3c4043; margin-left: 11px; white-space: nowrap; }
.jira { width: 18px; height: 24px; margin-left: 23px; }
.bm.bm-last { margin-left: 9px; }

/* business central */
.bc-header { height: 60px; background: #000; color: #fff; display: flex; align-items: center; padding-left: 19px; flex: none; }
.waffle { width: 20px; height: 20px; }
.logo { position: relative; width: 72px; height: 60px; margin-left: 33px; padding-top: 2px; }
.logo-box { width: 72px; height: 35px; background: #ac182b; font-size: 30px; line-height: 33px; font-weight: 600; text-align: center; letter-spacing: 2px; font-family: "Open Sans", sans-serif; }
.logo-bar { height: 6px; margin-top: 3px; background: #ac182b; }
.logo-tip { width: 0; height: 0; margin: 2px 0 0 4px; border-left: 10px solid transparent; border-top: 13px solid #ac182b; }
.bc-title { margin-left: 43px; font-size: 18.700px; font-weight: 500; white-space: nowrap; line-height: 24px; }
.bc-right { position: relative; margin-left: auto; display: flex; align-items: center; }
.env-badge { width: 35px; height: 35px; border-radius: 2px; background: #1677c5; display: flex; flex-direction: column; align-items: center; font-size: 13.500px; line-height: 15px; font-weight: 600; padding-top: 3px; }
.env-text { margin-left: 9px; width: 99px; display: flex; flex-direction: column; font-size: 11.700px; line-height: 19px; white-space: nowrap; }
.bc-ico { width: 24px; height: 24px; margin-right: 36px; }
.bc-gear { color: #fff; }
.bc-ico.bc-help { margin-right: 32px; }
.bc-cut { position: absolute; right: -17px; top: 8px; width: 20px; height: 20px; border: 1.500px solid #fff; border-radius: 50%; }
.bc-page { flex: 1; display: flex; flex-direction: column; padding-left: 50px; background-color: #bdbdbd; background-image: linear-gradient(90deg, rgba(0,0,0,0) 25%, rgba(0,0,0,.2) 100%), linear-gradient(#d2d2d2, #b4b4b4); background-size: 50px 100%; background-repeat: no-repeat; position: relative; min-height: 0; }
.dim-bar { height: 50px; display: flex; align-items: flex-start; background: linear-gradient(#d4d4d4, #cecece 55%, #a4a4a4); padding: 16px 98px 0 0; overflow: hidden; flex: none; }
.dim-back { width: 42px; height: 42px; margin-left: 21px; border-radius: 50%; background: #b6c6c6; display: flex; align-items: center; justify-content: center; }
.dim-back svg { width: 20px; height: 14px; }
.dim-title { margin-left: 22px; margin-top: 16px; font-size: 16.300px; color: #666; line-height: 18px; }
.dim-saved { margin-left: auto; margin-top: 16px; font-size: 16px; color: #666; line-height: 18px; display: flex; align-items: center; }
.dim-check { width: 18px; height: 16px; }
.dim-ico { margin-top: 16px; }
.dim-book { width: 14px; height: 22px; margin-left: 50px; }
.dim-open { width: 20px; height: 20px; margin-left: 22px; }
.dim-col { width: 20px; height: 20px; margin-left: 21px; color: #3d8086; }
.dialog { position: relative; flex: 1; margin-right: 4px; background: #f5f6f8; display: flex; flex-direction: column; min-height: 0; }
.dlg-head { height: 84px; background: #fff; display: flex; align-items: center; padding: 0 0 4px 30px; flex: none; }
.dlg-title { margin: 0; width: 236px; font-size: 23.600px; font-weight: 500; white-space: nowrap; color: #202020; }
.dlg-sep { width: 1px; height: 30px; margin-left: 18px; background: #ccc; }
.act-search { width: 22px; height: 22px; margin-left: 24px; }
.act-chev { width: 14px; height: 8px; margin-left: 9px; }
.act-plus { width: 20px; height: 20px; margin-left: 25px; }
.act-text { font-size: 16px; color: #333; margin-left: 6px; white-space: nowrap; }
.act-edit { width: 20px; height: 18px; margin-left: 25px; }
.act-more { margin-left: 23px; font-size: 16px; color: #444; letter-spacing: 1.500px; line-height: 16px; padding-bottom: 2px; }
.dlg-collapse { width: 20px; height: 20px; color: #555; margin-left: auto; }
.dlg-close { width: 20px; height: 20px; margin: 0 39px 0 20px; }
.grid { display: flex; flex-direction: column; padding-left: 30px; width: 1790px; }
.row { display: grid; grid-template-columns: 55px 229px 402px 195px 196px 195px 104px 195px 189px; }
.row-head { height: 71px; border-bottom: 2px solid #dcdee2; align-items: end; padding-bottom: 6px; font-size: 13.800px; line-height: 20px; color: #505c6d; white-space: nowrap; }
.row-head .single { margin-bottom: 3px; }
.sort { display: inline-block; width: 7px; height: 12px; vertical-align: 0; }
.row-data { height: 34px; align-items: center; font-size: 16.500px; color: #222; border-bottom: 1px solid #dcdee2; white-space: nowrap; }
.row-data.row-sel { height: 35px; background: #b2e8ec; border-bottom: 0; }
.link { color: #0f7b7f; }
.link.under { color: #0b6a6e; text-decoration: underline; }
.name-cell { display: flex; align-items: center; width: 203px; }
.kebab { margin-left: auto; font-size: 17px; line-height: 20px; }
.sel-arrow { width: 18px; height: 12px; margin-left: 14px; }
.check i { width: 15px; height: 15px; margin-left: 38px; background: #f7f7f8; border: 1px solid #cfcfcf; border-radius: 2px; }
.row-sel .check i { background: #e2f4f6; }
.dashed { text-decoration: underline dashed; text-underline-offset: 3px; }
.red-rect { position: absolute; left: 1380px; top: 63px; width: 203px; height: 106px; border: 4px solid #ed1c24; }
.sel-dot { position: absolute; left: 1568px; top: 363px; width: 10px; height: 10px; border: 3px solid #000; background: #fff; border-radius: 1px; }

/* paint bottom */
.hscroll { height: 15px; margin-right: 15px; background: #f8f9fb; display: flex; align-items: center; padding: 0 5px 0 5px; }
.arrow-left { width: 0; height: 0; border: 5px solid transparent; border-left: 0; border-right: 8px solid #8c8c8c; }
.h-thumb { width: 1807px; height: 8px; margin-left: 6px; background: #8a8a8a; border-radius: 4px; }
.arrow-right { width: 0; height: 0; margin-left: 64px; border: 5px solid transparent; border-right: 0; border-left: 8px solid #8c8c8c; }
.statusbar { height: 47px; border-top: 1px solid #e4e7ec; background: #f1f4f9; display: flex; align-items: center; padding: 0 15px 0 18px; }
.st-ico { width: 18px; height: 18px; }
.st-text { font-size: 13.800px; color: #222; margin-left: 9px; white-space: nowrap; }
.st-pos { width: 75px; }
.st-sel { width: 50px; margin-left: 10px; }
.st-sep { width: 1px; height: 26px; background: #e2e4e8; margin: 0 14px 0 53px; }
.st-sel + .st-sep { margin-left: 78px; }
.st-right { margin-left: auto; display: flex; align-items: center; }
.st-shot { width: 20px; height: 16px; }
.zoom-select { width: 113px; height: 35px; margin-left: 21px; background: #fbfcfd; border: 1px solid #e4e6ea; border-radius: 4px; display: flex; align-items: center; justify-content: space-between; padding: 0 18px 0 14px; font-size: 13.800px; }
.zoom-select svg { width: 11px; height: 7px; }
.zoom-ico { width: 20px; height: 20px; margin-left: 21px; }
.slider { width: 163px; margin-left: 15px; display: flex; align-items: center; }
.slider + .zoom-ico { margin-left: 15px; }
.slider-on { width: 11px; height: 5px; background: #0a66c2; border-radius: 3px 0 0 3px; }
.slider-thumb { width: 26px; height: 26px; border-radius: 50%; background: #0a66c2; border: 7px solid #fff; }
.slider-off { flex: 1; height: 5px; background: #8a8a8a; border-radius: 0 3px 3px 0; }

/* taskbar */
.taskbar { height: 60px; background: linear-gradient(90deg, #e6eff8 0, #d8e5f8 25%, #d5dff4 55%, #dfe8f6 75%, #e6f0f9 100%); display: flex; align-items: center; flex: none; }
.weather { width: 501px; padding-left: 26px; display: flex; align-items: center; }
.weather-ico { width: 30px; height: 26px; }
.weather-text { margin-left: 9px; display: flex; flex-direction: column; font-size: 14px; line-height: 20px; }
.w-desc { color: #4c5560; }
.winlogo { width: 30px; height: 30px; }
.tb-search { width: 272px; height: 38px; margin-left: 18px; background: #f3f6fd; border-radius: 19px; border: 1px solid #e6ebf5; display: flex; align-items: center; padding-left: 13px; font-size: 15.800px; color: #555; }
.tb-search svg { width: 20px; height: 20px; }
.tb-search span { margin-left: 12px; }
.tb-apps { margin-left: 3px; display: flex; align-items: center; }
.app { position: relative; width: 55.200px; height: 47px; display: flex; align-items: center; justify-content: center; }
.app svg { width: 30px; height: 30px; }
.app svg.teams { width: 34px; }
.app.running::after { content: ""; position: absolute; left: 24px; bottom: 0; width: 8px; height: 4px; border-radius: 2px; background: #6e7580; }
.app.active { width: 41px; margin-left: 7px; background: #eef3fb; border-radius: 4px; }
.app.active::after { content: ""; position: absolute; left: 14px; bottom: 0; width: 20px; height: 3px; border-radius: 2px; background: #0a6fd0; }
.chrome { width: 30px; height: 30px; border-radius: 50%; background: conic-gradient(from -30deg, #ea4335 0 120deg, #fbbc05 120deg 240deg, #34a853 240deg 360deg); display: flex; align-items: center; justify-content: center; }
.chrome i { width: 14px; height: 14px; border-radius: 50%; background: #1a73e8; border: 2.500px solid #fff; box-sizing: content-box; }
.tray { margin-left: auto; padding-right: 25px; display: flex; align-items: center; gap: 6px; }
.tray-ico { width: 24px; height: 22px; }
.tray-lang { margin-left: 12px; width: 30px; font-size: 14px; }
.tray-lang + .wifi { margin-left: 13px; }
.clock { width: 90px; display: flex; flex-direction: column; align-items: flex-end; font-size: 13.700px; line-height: 20px; white-space: nowrap; }
.notif { width: 20px; height: 20px; margin-left: 4px; border-radius: 50%; background: #0a6fd0; color: #fff; font-size: 12px; line-height: 20px; text-align: center; }
```
